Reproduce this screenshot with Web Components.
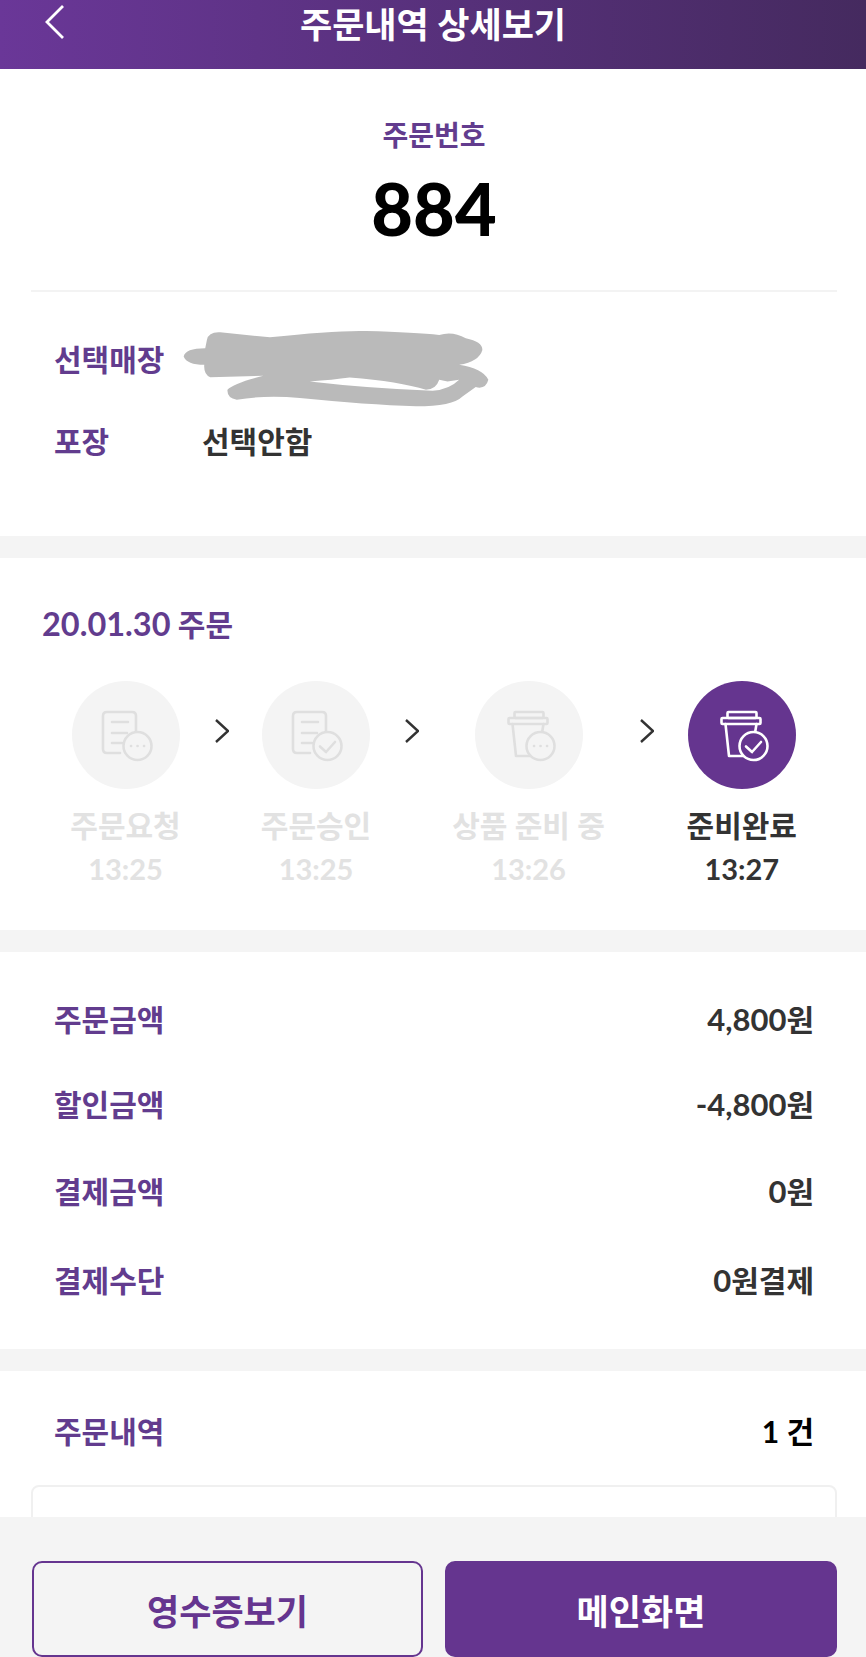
<!DOCTYPE html>
<html lang="ko">
<head>
<meta charset="utf-8">
<title>주문내역 상세보기</title>
<style>
  html, body {
    margin: 0;
    height: 100%;
    background: #fff;
    font-family: Lato, "Noto Sans CJK KR", sans-serif;
    --purple: #65358f;
    --label: #623c8e;
    --band: #f4f4f4;
    --dark: #333;
    --off: #e2e2e2;
  }
  body {
    display: flex;
    flex-direction: column;
    height: 1657px;
    overflow: hidden;
  }
  main {
    flex: 1;
    min-height: 0;
    overflow: hidden;
  }
</style>
</head>
<body>
  <page-header>주문내역 상세보기</page-header>
  <main>
    <page-section pad="46px 0 75px">
      <order-number number="884">주문번호</order-number>
      <info-row label="선택매장" style="margin-top:47px"><redact-mark></redact-mark></info-row>
      <info-row label="포장" style="margin-top:42px">선택안함</info-row>
    </page-section>
    <page-section pad="46px 0 41px" band>
      <order-steps date="20.01.30" suffix="주문"></order-steps>
    </page-section>
    <page-section pad="47px 0 49px" band>
      <amount-row label="주문금액"><span>4,800</span>원</amount-row>
      <amount-row label="할인금액" style="margin-top:45px"><span>-4,800</span>원</amount-row>
      <amount-row label="결제금액" style="margin-top:47px"><span>0</span>원</amount-row>
      <amount-row label="결제수단" style="margin-top:49px"><span>0</span>원결제</amount-row>
    </page-section>
    <page-section pad="40px 0 0" band>
      <amount-row label="주문내역" strong>1 건</amount-row>
      <order-card></order-card>
    </page-section>
  </main>
  <page-footer>
    <action-button>영수증보기</action-button>
    <action-button primary>메인화면</action-button>
  </page-footer>

<template id="page-header-template">
  <style>
    :host {
      display: grid;
      grid-template-columns: 1fr auto 1fr;
      flex: none;
      height: 69px;
      background: linear-gradient(90deg, #6a3798, #452a5f);
      color: #fff;
    }
    .back { display: block; margin: 5px 0 0 45px; }
    .title {
      font-size: 35px;
      font-weight: 700;
      line-height: 48px;
    }
  </style>
  <svg class="back" width="20" height="34" viewBox="0 0 20 34" fill="none" stroke="#fff" stroke-width="2.8">
    <path d="M18 1 L2 17 L18 33"/>
  </svg>
  <div class="title"><slot></slot></div>
</template>

<template id="page-section-template">
  <style>
    :host { display: block; background: #fff; }
    :host([band]) { border-top: 22px solid var(--band); }
  </style>
  <slot></slot>
</template>

<template id="order-number-template">
  <style>
    :host {
      display: block;
      margin: 0 29px 0 31px;
      padding-bottom: 42px;
      border-bottom: 2px solid #f3f3f3;
      text-align: center;
    }
    .label {
      font-size: 28px;
      font-weight: 700;
      line-height: 40px;
      color: var(--label);
    }
    .number {
      margin-top: 13px;
      font-size: 72px;
      font-weight: 900;
      line-height: 80px;
      color: #000;
    }
  </style>
  <div class="label"><slot></slot></div>
  <div class="number"></div>
</template>

<template id="info-row-template">
  <style>
    :host {
      display: grid;
      grid-template-columns: 148px 1fr;
      padding-left: 54px;
      font-size: 30px;
      font-weight: 700;
      line-height: 40px;
      color: var(--dark);
    }
    .label { color: var(--label); }
    .value { position: relative; }
  </style>
  <div class="label"></div>
  <div class="value"><slot></slot></div>
</template>

<template id="redact-mark-template">
  <style>
    :host { position: absolute; left: -19px; top: -8px; display: block; }
    svg { display: block; }
  </style>
  <svg width="310" height="77" viewBox="550 93 930 232">
    <path fill="#bababa" d="M620 120 Q625 95 660 97 L810 112 Q1000 92 1100 93 Q1250 97 1320 105 Q1360 92 1400 115 Q1450 125 1450 150 Q1440 185 1380 195 Q1450 205 1468 240 Q1460 270 1430 262 L1390 290 Q1360 320 1250 320 Q1100 315 900 295 Q800 285 710 300 Q680 295 682 270 Q700 250 790 228 L630 232 Q610 225 612 195 Q560 195 550 170 Q555 145 615 145 Z"/>
    <path fill="#fff" d="M930 245 Q1000 240 1050 233 Q1200 245 1280 270 Q1310 270 1320 240 L1345 245 L1380 240 Q1350 270 1300 273 Q1100 265 930 245 Z"/>
  </svg>
</template>

<template id="order-steps-template">
  <style>
    :host { display: block; }
    .date {
      padding-left: 42px;
      font-size: 30px;
      font-weight: 700;
      line-height: 40px;
      color: var(--label);
    }
    .day { font-size: 32.5px; }
    .steps {
      display: grid;
      grid-template-columns: 121px 71px 118px 74px 159px 77px 113.5px;
      margin-top: 37px;
      padding-left: 65px;
    }
    .arrow { justify-self: center; margin-top: 38px; display: block; }
  </style>
  <div class="date"><span class="day"></span> <span class="suffix"></span></div>
  <div class="steps">
    <step-item name="주문요청" time="13:25" icon="doc-wait"></step-item>
    <svg class="arrow" width="14" height="24" viewBox="0 0 14 24" fill="none" stroke="#333" stroke-width="2.4"><path d="M1 1 L13 12 L1 23"/></svg>
    <step-item name="주문승인" time="13:25" icon="doc-check"></step-item>
    <svg class="arrow" width="14" height="24" viewBox="0 0 14 24" fill="none" stroke="#333" stroke-width="2.4"><path d="M1 1 L13 12 L1 23"/></svg>
    <step-item name="상품 준비 중" time="13:26" icon="cup-wait"></step-item>
    <svg class="arrow" width="14" height="24" viewBox="0 0 14 24" fill="none" stroke="#333" stroke-width="2.4"><path d="M1 1 L13 12 L1 23"/></svg>
    <step-item name="준비완료" time="13:27" icon="cup-check" active></step-item>
  </div>
</template>

<template id="step-item-template">
  <style>
    :host {
      display: flex;
      flex-direction: column;
      align-items: center;
      font-weight: 700;
      color: var(--off);
      --disc: var(--band);
      --line: #dfdfdf;
    }
    :host([active]) {
      color: var(--dark);
      --disc: var(--purple);
      --line: #fff;
    }
    svg { display: block; }
    .name {
      margin-top: 16px;
      font-size: 30px;
      line-height: 40px;
      white-space: nowrap;
    }
    .time {
      margin-top: 4px;
      font-size: 29px;
      line-height: 40px;
    }
  </style>
  <svg width="108" height="108" viewBox="0 0 108 108" fill="none"></svg>
  <div class="name"></div>
  <div class="time"></div>
</template>

<template id="amount-row-template">
  <style>
    :host {
      display: flex;
      justify-content: space-between;
      padding: 0 52px 0 54px;
      font-size: 30px;
      font-weight: 700;
      line-height: 40px;
      color: var(--dark);
    }
    :host([strong]) { color: #000; }
    .label { color: var(--label); }
    ::slotted(span) { font-size: 31px; }
  </style>
  <div class="label"></div>
  <div><slot></slot></div>
</template>

<template id="order-card-template">
  <style>
    :host {
      display: block;
      height: 200px;
      margin: 34px 29px 0 31px;
      border: 2px solid #f0f0f0;
      border-radius: 8px;
      background: #fff;
    }
  </style>
</template>

<template id="page-footer-template">
  <style>
    :host {
      display: grid;
      grid-template-columns: 391px 392px;
      gap: 22px;
      flex: none;
      padding: 44px 0 0 32px;
      background: var(--band);
    }
  </style>
  <slot></slot>
</template>

<template id="action-button-template">
  <style>
    :host {
      display: flex;
      align-items: center;
      justify-content: center;
      box-sizing: border-box;
      height: 96px;
      border: 2px solid var(--purple);
      border-radius: 10px;
      font-size: 35px;
      font-weight: 700;
      color: var(--purple);
    }
    :host([primary]) {
      background: var(--purple);
      color: #fff;
    }
  </style>
  <slot></slot>
</template>

<script>
  (function () {
    function simple(tag, templateId, onConnect) {
      const template = document.querySelector(templateId);
      customElements.define(
        tag,
        class extends HTMLElement {
          connectedCallback() {
            if (this.shadowRoot) return;
            this.attachShadow({ mode: "open" });
            this.shadowRoot.appendChild(template.content.cloneNode(true));
            if (onConnect) onConnect(this, this.shadowRoot);
          }
        }
      );
    }

    const lidAndCup = `
      <rect x="39.5" y="31" width="29" height="6" rx="1"/>
      <rect x="33.5" y="37" width="39" height="6" rx="1"/>
      <path d="M37.5 43 L41 75 H58 M68.5 43 L67 52"/>`;
    const doc = `
      <path d="M48 72 H35 Q31 72 31 68 V35 Q31 31 35 31 H60 Q64 31 64 35 V52"/>
      <path d="M40 41 H56 M40 52 H55 M40 62 H50"/>`;
    const check = `
      <circle cx="65.5" cy="65" r="14" fill="var(--disc)"/>
      <path d="M58 65.5 L64 71 L73 61"/>`;
    const wait = `
      <circle cx="65.5" cy="65" r="14" fill="var(--disc)"/>
      <path d="M59 65 h.1 M65.5 65 h.1 M72 65 h.1"/>`;
    const icons = {
      "doc-wait": doc + wait,
      "doc-check": doc + check,
      "cup-wait": lidAndCup + wait,
      "cup-check": lidAndCup + check,
    };

    simple("page-header", "#page-header-template");
    simple("page-section", "#page-section-template", function (host) {
      host.style.padding = host.getAttribute("pad");
    });
    simple("order-number", "#order-number-template", function (host, root) {
      root.querySelector(".number").textContent = host.getAttribute("number");
    });
    simple("info-row", "#info-row-template", function (host, root) {
      root.querySelector(".label").textContent = host.getAttribute("label");
    });
    simple("redact-mark", "#redact-mark-template");
    simple("order-steps", "#order-steps-template", function (host, root) {
      root.querySelector(".day").textContent = host.getAttribute("date");
      root.querySelector(".suffix").textContent = host.getAttribute("suffix");
    });
    simple("step-item", "#step-item-template", function (host, root) {
      root.querySelector(".name").textContent = host.getAttribute("name");
      root.querySelector(".time").textContent = host.getAttribute("time");
      root.querySelector("svg").innerHTML =
        `<circle cx="54" cy="54" r="54" fill="var(--disc)"/>
         <g stroke="var(--line)" stroke-width="2.6" stroke-linecap="round" stroke-linejoin="round">${icons[host.getAttribute("icon")]}</g>`;
    });
    simple("amount-row", "#amount-row-template", function (host, root) {
      root.querySelector(".label").textContent = host.getAttribute("label");
    });
    simple("order-card", "#order-card-template");
    simple("page-footer", "#page-footer-template");
    simple("action-button", "#action-button-template");
  })();
</script>
</body>
</html>
